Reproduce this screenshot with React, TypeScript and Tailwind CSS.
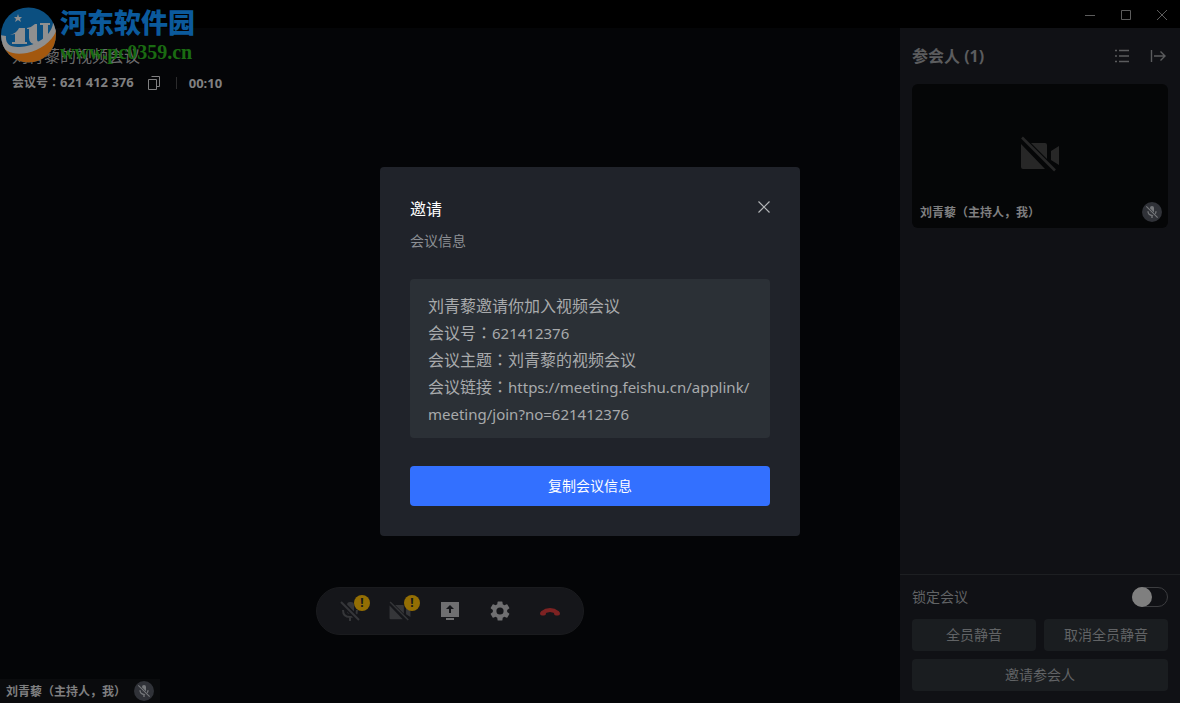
import type { ReactNode } from "react";

const person = "刘青藜（主持人，我）";

// full-width colon, centred in its cell
const Colon = () => <span className="font-['Noto_Sans_CJK_TC',sans-serif] leading-none">：</span>;

const MicOffBadge = () => (
  <span className="flex size-5 shrink-0 items-center justify-center rounded-full bg-[#303238]">
    <svg viewBox="0 0 24 24" className="size-4 text-[#77797c]">
      <rect x="9" y="3" width="6" height="11" rx="3" fill="currentColor" />
      <path
        d="M6 11a6 6 0 0 0 12 0M12 17v4"
        fill="none"
        stroke="currentColor"
        strokeWidth="2"
      />
      <path d="M4 4l16 17" stroke="#303238" strokeWidth="4" />
      <path d="M3.500 3.500l17 17" stroke="currentColor" strokeWidth="1.600" />
    </svg>
  </span>
);

const CameraOff = ({ className }: { className: string }) => (
  <svg viewBox="0 0 40 36" className={className} fill="currentColor">
    <path d="M1 8v23q0 2 2 2h22zM11 7h14q2 0 2 2v14zM31 15l8-5v19l-8-5z" />
    <path d="M2 1.500l33 33" stroke="currentColor" strokeWidth="2.600" />
  </svg>
);

const Logo = () => (
  <svg viewBox="0 0 56 60" className="h-[60px] w-14 shrink-0">
    <defs>
      <clipPath id="disc">
        <circle cx="28.500" cy="31" r="27.500" />
      </clipPath>
    </defs>
    <g clipPath="url(#disc)">
      <path d="M0 0h57v60H0z" fill="#0b4f80" />
      <path d="M0 38q30 16 57-14v36H0z" fill="#a3580f" />
      <path
        d="M0 31c-1 16 12 21 27 18 14-3 26-12 30-24l-4-9c1 11-10 22-26 26-14 3-22 0-21-10z"
        fill="#8f8f8f"
      />
    </g>
    <g fill="#8f8f8f">
      <path d="M10 31q7-2 9-7h6v14h2v2H12v-2h3V30z" />
      <path d="M27 24q5-1 8-4h2v15q0 3 3 3t3-4V21h-3v-2h10v2h-2v13q0 7-9 7-10 0-10-7v-9h-2z" />
      <path d="M18 10l1 3h3l-2 2 1 3-3-2-3 2 1-3-2-2h3z" />
    </g>
  </svg>
);

type ToolProps = { label: string; warn?: boolean; children: ReactNode };

const ToolButton = ({ label, warn, children }: ToolProps) => (
  <button aria-label={label} className="relative flex size-6 items-center justify-center">
    {children}
    {warn && (
      <span className="absolute -top-1 left-4 flex size-4 items-center justify-center rounded-full bg-[#936e04] text-xs font-bold text-[#15161a]">
        !
      </span>
    )}
  </button>
);

const MeetingHeader = () => (
  <header className="relative px-3 pt-4">
    {/* site mark drawn across the title bar */}
    <div className="absolute -top-6 left-0 flex">
      <Logo />
      <div className="pl-1 font-['Liberation_Serif','Noto_Sans_CJK_SC',serif]">
        <p className="text-[27px] leading-10 font-black text-[#0b5a9c]">河东软件园</p>
        <p className="text-xl leading-4 font-bold text-[#1a6b12]">www.pc0359.cn</p>
      </div>
    </div>
    <h1 className="text-base leading-6 text-[#6c6c6d]">刘青藜的视频会议</h1>
    <div className="mt-1 flex items-center text-xs leading-5 font-bold text-[#808081]">
      <span>
        会议号
        <Colon />
        <span className="text-[13px]">621 412 376</span>
      </span>
      <button aria-label="复制会议号" className="ml-3.5">
        <svg viewBox="0 0 14 14" className="size-3.5" fill="none" stroke="currentColor">
          <path d="M3.500 .5h8v10h-2.500M.5 3.500h8v10h-8z" />
        </svg>
      </button>
      <span className="mr-3 ml-3.5 h-3 w-px bg-[#2b2b2c]" />
      <span className="text-[13px]">00:10</span>
    </div>
  </header>
);

const Toolbar = () => (
  <div className="flex h-12 items-center gap-[26px] rounded-full border border-[#1a1b1e] bg-[#15161a] px-[21px] text-[#6f6f71]">
    <ToolButton label="麦克风" warn>
      <svg viewBox="0 0 24 24" className="size-6 text-[#353639]">
        <rect x="9" y="3" width="7" height="12" rx="3" fill="currentColor" />
        <path d="M5 11q0 7 7 7 7 0 7-7M12 18v4" fill="none" stroke="currentColor" strokeWidth="2" />
        <path d="M3 3l18 18" stroke="#15161a" strokeWidth="5" />
        <path d="M3 3l18 18" stroke="currentColor" strokeWidth="2" />
      </svg>
    </ToolButton>
    <ToolButton label="摄像头" warn>
      <CameraOff className="size-[22px] text-[#353639]" />
    </ToolButton>
    <ToolButton label="共享屏幕">
      <svg viewBox="0 0 20 20" className="size-5" fill="currentColor">
        <path fillRule="evenodd" d="M1 1h18v15H1zM10 4l-4 4h3v4h2V8h3zM6 17h8v2H6z" />
      </svg>
    </ToolButton>
    <ToolButton label="设置">
      <svg viewBox="0 0 24 24" className="size-6" fill="currentColor">
        <path d="M19.140 12.940c.04-.3.06-.61.06-.94 0-.32-.02-.64-.07-.94l2.030-1.580a.49.49 0 0 0 .12-.61l-1.920-3.320a.49.49 0 0 0-.59-.22l-2.390.96a7 7 0 0 0-1.620-.94l-.36-2.540a.48.48 0 0 0-.48-.41h-3.840a.48.48 0 0 0-.47.41l-.36 2.540a7 7 0 0 0-1.620.94l-2.390-.96a.49.49 0 0 0-.59.22L2.740 8.870a.48.48 0 0 0 .12.61l2.030 1.580c-.05.3-.09.63-.09.94s.02.64.07.94l-2.030 1.580a.49.49 0 0 0-.12.61l1.920 3.320c.12.22.37.29.59.22l2.390-.96c.5.38 1.030.7 1.620.94l.36 2.540c.05.24.24.41.48.41h3.840c.24 0 .44-.17.47-.41l.36-2.540a7 7 0 0 0 1.620-.94l2.390.96c.22.08.47 0 .59-.22l1.920-3.320a.48.48 0 0 0-.12-.61zM12 15.600A3.600 3.600 0 1 1 12 8.400a3.600 3.600 0 0 1 0 7.200" />
      </svg>
    </ToolButton>
    <ToolButton label="挂断">
      <svg viewBox="0 0 24 24" className="size-6" fill="none" stroke="#7d2222">
        <path d="M4 14q8-6 16 0" strokeWidth="4" />
        <path d="M4 14.500h2M18 14.500h2" strokeWidth="4" strokeLinecap="round" />
      </svg>
    </ToolButton>
  </div>
);

const Sidebar = () => (
  <aside className="flex w-[280px] shrink-0 flex-col bg-[#101115]">
    <div className="flex h-14 items-center pr-3.5 pl-3 text-[#5b5c5e]">
      <h2 className="flex-1 text-base font-bold">参会人 (1)</h2>
      <button aria-label="列表">
        <svg viewBox="0 0 16 16" className="size-4" fill="none" stroke="currentColor" strokeWidth="1.400">
          <path d="M1 2.500h2M5 2.500h10M1 8h2M5 8h10M1 13.500h2M5 13.500h10" />
        </svg>
      </button>
      <button aria-label="收起" className="ml-5">
        <svg viewBox="0 0 16 16" className="size-4" fill="none" stroke="currentColor" strokeWidth="1.400">
          <path d="M1.500 2v12M4 8h11M10.500 3.500L15 8l-4.500 4.500" />
        </svg>
      </button>
    </div>
    <div className="mx-3 flex h-36 flex-col rounded-md bg-[#050607]">
      <div className="flex flex-1 items-end justify-center text-[#272727]">
        <CameraOff className="mb-6 h-9 w-10" />
      </div>
      <div className="flex h-8 items-center justify-between pr-1.5 pl-2 text-xs font-bold text-[#7f7f80]">
        <span className="pt-0.5">{person}</span>
        <MicOffBadge />
      </div>
    </div>
    <div className="mt-auto border-t border-[#1d1f22] px-3 pt-2 pb-3 text-sm text-[#616365]">
      <label className="flex h-7 items-center justify-between">
        锁定会议
        <span className="relative flex">
          <input
            type="checkbox"
            className="h-5 w-9 appearance-none rounded-full border border-[#3c3d40]"
          />
          <span className="absolute top-0 left-0 size-5 rounded-full bg-[#7f7f7f]" />
        </span>
      </label>
      <div className="mt-2 grid grid-cols-2 gap-2">
        <button className="h-8 rounded-sm bg-[#1a1d20]">全员静音</button>
        <button className="h-8 rounded-sm bg-[#1a1d20]">取消全员静音</button>
        <button className="col-span-2 h-8 rounded-sm bg-[#1a1d20]">邀请参会人</button>
      </div>
    </div>
  </aside>
);

const InviteDialog = () => (
  <div
    role="dialog"
    aria-labelledby="invite-title"
    className="w-[420px] rounded-sm bg-[#20232a] px-[30px] pt-7 pb-[30px]"
  >
    <div className="flex items-start justify-between">
      <h2 id="invite-title" className="text-base leading-7 text-white">
        邀请
      </h2>
      <button aria-label="关闭" className="-mr-1.5 p-1.5">
        <svg viewBox="0 0 12 12" className="size-3" stroke="#b4b6b9" strokeWidth="1.200">
          <path d="M.5 .5l11 11M11.500 .5l-11 11" />
        </svg>
      </button>
    </div>
    <p className="mt-2 text-sm text-[#8c8f94]">会议信息</p>
    <div className="mt-7 rounded-sm bg-[#2b3036] px-[18px] pt-3.5 pb-2.5 text-base leading-[27px] text-[#a8aaac]">
      <p>刘青藜邀请你加入视频会议</p>
      <p>
        会议号
        <Colon />
        <span className="text-[15px]">621412376</span>
      </p>
      <p>
        会议主题
        <Colon />
        刘青藜的视频会议
      </p>
      <p>
        会议链接
        <Colon />
        <span className="text-[15px]">
          https://meeting.feishu.cn/applink/
          <br />
          meeting/join?no=621412376
        </span>
      </p>
    </div>
    <button className="mt-7 h-10 w-full rounded-sm bg-[#3370ff] text-sm text-white">
      复制会议信息
    </button>
  </div>
);

const App = () => {
  return (
    <div className="flex min-h-screen flex-col bg-[#040507] font-['Noto_Sans','Noto_Sans_CJK_SC',sans-serif]">
      {/* window controls */}
      <div className="flex h-7 items-center justify-end gap-[26px] bg-black pt-0.5 pr-[13px] text-[#5c5c5c]">
        <button aria-label="最小化">
          <svg viewBox="0 0 10 10" className="size-2.5" stroke="currentColor">
            <path d="M0 5.500h10" />
          </svg>
        </button>
        <button aria-label="最大化">
          <svg viewBox="0 0 10 10" className="size-2.5" fill="none" stroke="currentColor">
            <path d="M.5 .5h9v9h-9z" />
          </svg>
        </button>
        <button aria-label="关闭窗口">
          <svg viewBox="0 0 10 10" className="size-2.5" stroke="currentColor">
            <path d="M0 0l10 10M10 0L0 10" />
          </svg>
        </button>
      </div>
      <div className="flex flex-1">
        <main className="flex flex-1 flex-col">
          <MeetingHeader />
          <div className="mt-auto flex justify-center">
            <Toolbar />
          </div>
          <div className="mt-11 flex h-6 items-center gap-2 self-start bg-[#0a0b0d] px-1.5 text-xs font-bold text-[#7f7f80]">
            <span className="pt-0.5">{person}</span>
            <MicOffBadge />
          </div>
        </main>
        <Sidebar />
      </div>
      <div className="fixed inset-0 flex items-center justify-center">
        <InviteDialog />
      </div>
    </div>
  );
};

export default App;
